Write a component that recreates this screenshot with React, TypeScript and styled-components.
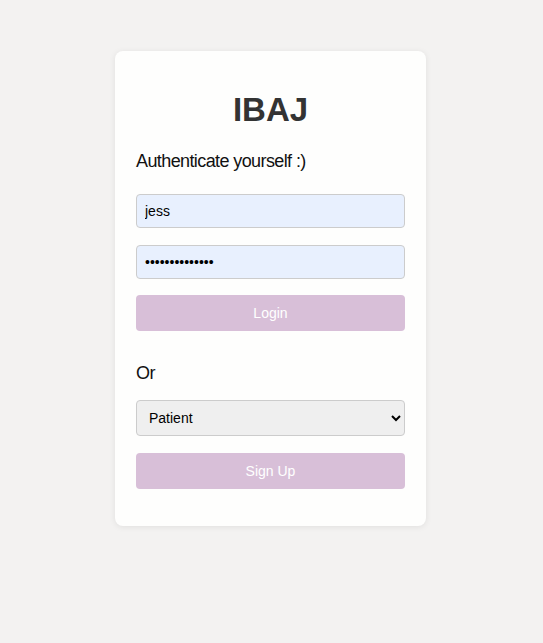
import React from "react";
import styled, { createGlobalStyle } from "styled-components";

const Global = createGlobalStyle`
  html, body {
    margin: 0;
    padding: 0;
    background: #f3f2f1;
    font-family: "Liberation Sans", Arial, sans-serif;
  }
  * { box-sizing: border-box; }
`;

const Page = styled.div`
  display: flex;
  justify-content: center;
  align-items: flex-start;
  padding: 51px 2px 0 0;
  min-height: 643px;
`;

const Card = styled.div`
  width: 311px;
  background: #fefefd;
  border-radius: 8px;
  box-shadow: 0 1px 6px rgba(0, 0, 0, 0.08);
  padding: 40px 21px 37px 21px;
  display: flex;
  flex-direction: column;
`;

const Title = styled.h1`
  margin: 0;
  text-align: center;
  font-size: 33px;
  font-weight: bold;
  color: #333;
  line-height: 37px;
`;

const Label = styled.p<{ $top: number }>`
  margin: ${(p) => p.$top}px 0 0 0;
  font-size: 18px;
  letter-spacing: -0.6px;
  line-height: 21px;
  color: #111;
`;

const Input = styled.input<{ $top: number }>`
  margin-top: ${(p) => p.$top}px;
  width: 100%;
  height: 34px;
  padding: 0 8px;
  border: 1px solid #ccc;
  border-radius: 4px;
  background: #e8f0fe;
  font-family: "Liberation Sans", Arial, sans-serif;
  font-size: 14px;
  color: #000;
  outline: none;
`;

const Button = styled.button<{ $top: number }>`
  margin-top: ${(p) => p.$top}px;
  width: 100%;
  height: 36px;
  border: none;
  border-radius: 4px;
  background: #d8bfd8;
  color: #fff;
  font-family: "Liberation Sans", Arial, sans-serif;
  font-size: 14px;
  cursor: pointer;
`;

const Select = styled.select<{ $top: number }>`
  margin-top: ${(p) => p.$top}px;
  width: 100%;
  height: 36px;
  padding: 0 8px;
  border: 1px solid #ccc;
  border-radius: 4px;
  background: #efefef;
  font-family: "Liberation Sans", Arial, sans-serif;
  font-size: 14px;
  color: #000;
`;

export default function App() {
  return (
    <>
      <Global />
      <Page>
        <Card>
          <Title>IBAJ</Title>
          <Label $top={23}>Authenticate yourself :)</Label>
          <Input $top={22} type="text" defaultValue="jess" />
          <Input $top={17} type="password" defaultValue="abcdefghijklmn" />
          <Button $top={16}>Login</Button>
          <Label $top={32}>Or</Label>
          <Select $top={16} defaultValue="Patient">
            <option>Patient</option>
            <option>Doctor</option>
          </Select>
          <Button $top={17}>Sign Up</Button>
        </Card>
      </Page>
    </>
  );
}
